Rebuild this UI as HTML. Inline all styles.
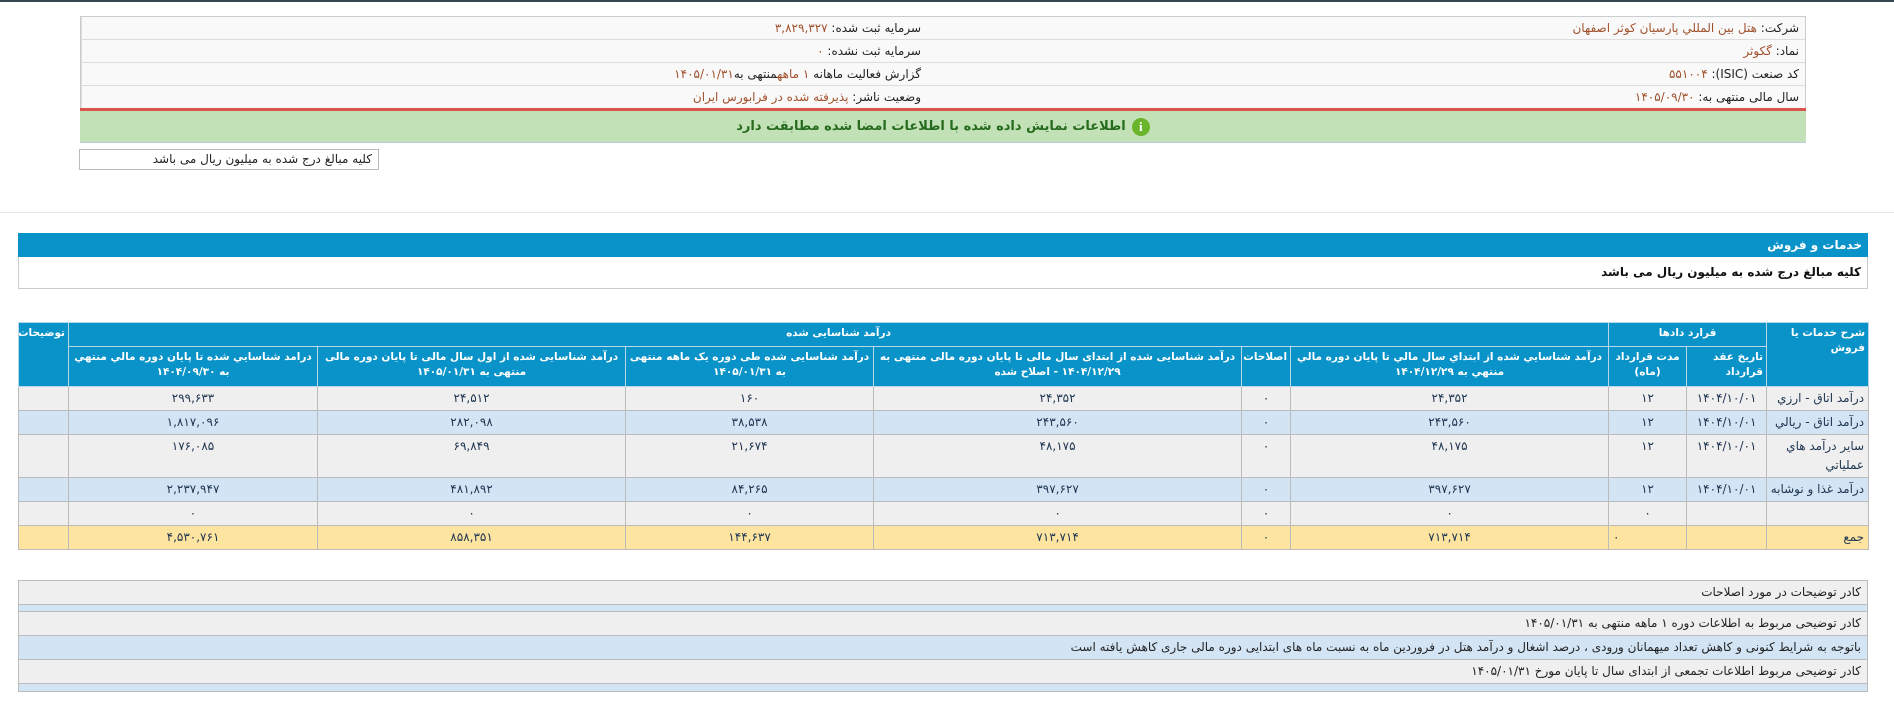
<!DOCTYPE html>
<html><head><meta charset="utf-8">
<style>
*{margin:0;padding:0;box-sizing:border-box}
body{width:1894px;height:715px;background:#fff;font-family:"DejaVu Sans","Liberation Sans",sans-serif;font-size:12px;color:#222;position:relative;overflow:hidden;direction:rtl}
.abs{position:absolute}
#topline{left:0;top:0;width:1894px;height:2px;background:#37474f}
#info{left:80px;top:16px;width:1726px;border:1px solid #ccc;border-bottom:none}
#info .r{height:23px;border-bottom:1px solid #ddd;display:flex;background:#f9f9f9}
#info .c1{width:846px;border-left:1px solid #ddd;padding-right:6px;line-height:22px}
#info .c2{flex:1;padding-right:6px;line-height:22px}
.v{color:#a0522d}
#red{left:80px;top:108px;width:1726px;height:3px;background:#d9534f}
#green{left:80px;top:111px;width:1726px;height:32px;background:#c3e1b6;border-bottom:1px solid #bcd;color:#256b1e;font-weight:bold;font-size:13px;line-height:31px;text-align:center}
.ic{display:inline-block;width:18px;height:18px;border-radius:50%;background:#6bb52d;color:#fff;font-size:13px;line-height:18px;vertical-align:middle;margin-left:6px;font-family:"Liberation Serif",serif;font-weight:bold}
#small{left:79px;top:149px;width:300px;height:21px;border:1px solid #bbb;padding-right:6px;line-height:19px;font-size:12px}
#gl{left:0;top:212px;width:1894px;height:1px;background:#e6e6e6}
#bh{left:18px;top:233px;width:1850px;height:24px;background:#0993c8;color:#fff;font-weight:bold;padding-right:6px;line-height:24px;font-size:12px}
#bw{left:18px;top:257px;width:1850px;height:32px;border:1px solid #ccc;border-top:none;font-weight:bold;padding-right:6px;line-height:30px;font-size:12px;color:#111}
table{position:absolute;left:18px;top:322px;width:1850px;border-collapse:collapse;table-layout:fixed;font-size:12px}
th{background:#0993c8;color:#fff;font-weight:bold;border:1px solid #b9d7e8;font-size:10.5px;line-height:15px;vertical-align:top;padding:3px 3px 0;text-align:center;overflow:hidden}
th.r{text-align:right}
td{border:1px solid #bbb;text-align:center;color:#1e3550;padding:0 4px;height:24px;vertical-align:top;line-height:22px;white-space:nowrap;overflow:hidden}
td.r{text-align:right}
tr.g td{background:#efefef}
tr.b td{background:#d3e5f5}
tr.y td{background:#fde4a0}
#bot{left:18px;top:580px;width:1850px;border:1px solid #bbb}
#bot div{border-bottom:1px solid #bbb;padding-right:6px;font-size:12px;line-height:23px;white-space:nowrap;overflow:hidden}
#bot div:last-child{border-bottom:none}
.gg{background:#efefef;height:24px}
.bb{background:#d3e5f5}
.thin{height:7px}
</style></head><body>
<div class="abs" id="topline"></div>
<div class="abs" id="info">
<div class="r"><div class="c2">شرکت: <span class="v">هتل بين المللي پارسيان كوثر اصفهان</span></div><div class="c1">سرمایه ثبت شده: <span class="v">۳,۸۲۹,۳۲۷</span></div></div>
<div class="r"><div class="c2">نماد: <span class="v">گكوثر</span></div><div class="c1">سرمایه ثبت نشده: <span class="v">۰</span></div></div>
<div class="r"><div class="c2">کد صنعت (ISIC): <span class="v">۵۵۱۰۰۴</span></div><div class="c1">گزارش فعالیت ماهانه <span class="v">۱ ماهه</span>منتهی به<span class="v">۱۴۰۵/۰۱/۳۱</span></div></div>
<div class="r"><div class="c2">سال مالی منتهی به: <span class="v">۱۴۰۵/۰۹/۳۰</span></div><div class="c1">وضعیت ناشر: <span class="v">پذیرفته شده در فرابورس ایران</span></div></div>
</div>
<div class="abs" id="red"></div>
<div class="abs" id="green"><span class="ic">i</span>اطلاعات نمایش داده شده با اطلاعات امضا شده مطابقت دارد</div>
<div class="abs" id="small">کلیه مبالغ درج شده به میلیون ریال می باشد</div>
<div class="abs" id="gl"></div>
<div class="abs" id="bh">خدمات و فروش</div>
<div class="abs" id="bw">کلیه مبالغ درج شده به میلیون ریال می باشد</div>
<table>
<colgroup><col style="width:102px"><col style="width:80px"><col style="width:78px"><col style="width:318px"><col style="width:49px"><col style="width:368px"><col style="width:248px"><col style="width:308px"><col style="width:249px"><col style="width:50px"></colgroup>
<tr style="height:24px"><th rowspan="2" class="r">شرح خدمات یا فروش</th><th colspan="2">قرارد دادها</th><th colspan="6">درآمد شناسایی شده</th><th rowspan="2" class="r">توضیحات</th></tr>
<tr style="height:40px"><th class="r">تاریخ عقد قرارداد</th><th>مدت قرارداد (ماه)</th><th>درآمد شناسايي شده از ابتداي سال مالي تا پايان دوره مالي منتهي به ۱۴۰۴/۱۲/۲۹</th><th>اصلاحات</th><th>درآمد شناسایی شده از ابتدای سال مالی تا پایان دوره مالی منتهی به ۱۴۰۴/۱۲/۲۹ - اصلاح شده</th><th>درآمد شناسایی شده طی دوره یک ماهه منتهی به ۱۴۰۵/۰۱/۳۱</th><th>درآمد شناسایی شده از اول سال مالی تا پایان دوره مالی منتهی به ۱۴۰۵/۰۱/۳۱</th><th>درامد شناسايي شده تا پايان دوره مالي منتهي به ۱۴۰۴/۰۹/۳۰</th></tr>
<tr class="g"><td class="r">درآمد اتاق - ارزي</td><td>۱۴۰۴/۱۰/۰۱</td><td>۱۲</td><td>۲۴,۳۵۲</td><td>۰</td><td>۲۴,۳۵۲</td><td>۱۶۰</td><td>۲۴,۵۱۲</td><td>۲۹۹,۶۳۳</td><td></td></tr>
<tr class="b"><td class="r">درآمد اتاق - ريالي</td><td>۱۴۰۴/۱۰/۰۱</td><td>۱۲</td><td>۲۴۳,۵۶۰</td><td>۰</td><td>۲۴۳,۵۶۰</td><td>۳۸,۵۳۸</td><td>۲۸۲,۰۹۸</td><td>۱,۸۱۷,۰۹۶</td><td></td></tr>
<tr class="g" style="height:43px"><td class="r" style="line-height:19px;padding-top:2px;white-space:normal">ساير درآمد هاي عملياتي</td><td>۱۴۰۴/۱۰/۰۱</td><td>۱۲</td><td>۴۸,۱۷۵</td><td>۰</td><td>۴۸,۱۷۵</td><td>۲۱,۶۷۴</td><td>۶۹,۸۴۹</td><td>۱۷۶,۰۸۵</td><td></td></tr>
<tr class="b"><td class="r">درآمد غذا و نوشابه</td><td>۱۴۰۴/۱۰/۰۱</td><td>۱۲</td><td>۳۹۷,۶۲۷</td><td>۰</td><td>۳۹۷,۶۲۷</td><td>۸۴,۲۶۵</td><td>۴۸۱,۸۹۲</td><td>۲,۲۳۷,۹۴۷</td><td></td></tr>
<tr class="g"><td></td><td></td><td>۰</td><td>۰</td><td>۰</td><td>۰</td><td>۰</td><td>۰</td><td>۰</td><td></td></tr>
<tr class="y"><td class="r">جمع</td><td></td><td style="text-align:left">۰</td><td>۷۱۳,۷۱۴</td><td>۰</td><td>۷۱۳,۷۱۴</td><td>۱۴۴,۶۳۷</td><td>۸۵۸,۳۵۱</td><td>۴,۵۳۰,۷۶۱</td><td></td></tr>
</table>
<div class="abs" id="bot">
<div class="gg">کادر توضیحات در مورد اصلاحات</div>
<div class="bb thin"></div>
<div class="gg">کادر توضیحی مربوط به اطلاعات دوره ۱ ماهه منتهی به ۱۴۰۵/۰۱/۳۱</div>
<div class="bb" style="height:24px">باتوجه به شرایط کنونی و کاهش تعداد میهمانان ورودی ، درصد اشغال و درآمد هتل در فروردین ماه به نسبت ماه های ابتدایی دوره مالی جاری کاهش یافته است</div>
<div class="gg">کادر توضیحی مربوط اطلاعات تجمعی از ابتدای سال تا پایان مورخ ۱۴۰۵/۰۱/۳۱</div>
<div class="bb thin"></div>
</div>
</body></html>
